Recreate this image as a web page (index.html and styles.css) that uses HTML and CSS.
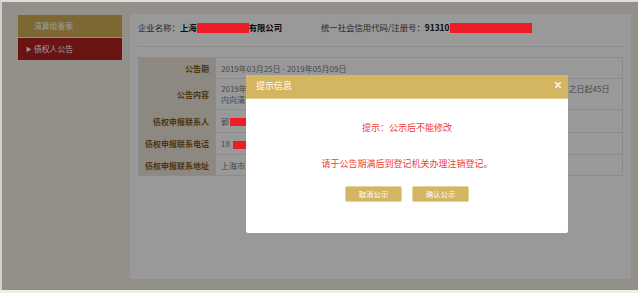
FILE: index.html
```html
<!DOCTYPE html>
<html lang="zh-CN">
<head>
<meta charset="utf-8">
<title>债权人公告</title>
<link rel="stylesheet" href="styles.css">
</head>
<body>
<div class="frame">
  <aside class="sidebar">
    <div class="side-item side-gold">清算组备案</div>
    <div class="side-item side-red"><span class="arrow">▶</span>债权人公告</div>
  </aside>
  <main class="panel">
    <div class="info-head">
      <div class="info-name">企业名称：<b>上海<span class="redact redact-name"></span>有限公司</b></div>
      <div class="info-code">统一社会信用代码/注册号：<b>91310<span class="redact redact-code"></span></b></div>
    </div>
    <table class="notice">
      <tr class="row-1"><th>公告期</th><td>2019年03月25日 - 2019年05月09日</td></tr>
      <tr class="row-2"><th>公告内容</th><td>2019年03月25日，上海某某有限公司经股东决定解散公司并成立了清算组，请各位债权人自本公告之日起45日<br>内向清算组申报债权，逾期未申报的视为放弃。</td></tr>
      <tr class="row-3"><th>债权申报联系人</th><td>郭<span class="redact redact-person"></span></td></tr>
      <tr class="row-4"><th>债权申报联系电话</th><td>18<span class="redact redact-phone"></span></td></tr>
      <tr class="row-5"><th>债权申报联系地址</th><td>上海市浦东新区某某路某某号</td></tr>
    </table>
  </main>
  <div class="overlay"></div>
  <div class="modal">
    <div class="modal-head">
      <span class="modal-title">提示信息</span>
      <svg class="modal-close" width="6" height="6" viewBox="0 0 6 6"><path d="M0.8 0.8 L5.2 5.2 M5.2 0.8 L0.8 5.2" stroke="#fff" stroke-width="1.5" stroke-linecap="round"/></svg>
    </div>
    <div class="modal-body">
      <p class="msg msg-1">提示：公示后不能修改</p>
      <p class="msg msg-2">请于公告期满后到登记机关办理注销登记。</p>
      <div class="actions">
        <button class="btn">取消公示</button>
        <button class="btn">确认公示</button>
      </div>
    </div>
  </div>
</div>
</body>
</html>
```

FILE: styles.css
```css
* { box-sizing: border-box; }
html, body { margin: 0; padding: 0; }
body {
  background: #efeee9;
  font-family: "Noto Sans CJK SC", "Noto Sans", sans-serif;
  width: 638px;
  height: 293px;
  overflow: hidden;
}
.frame {
  position: relative;
  height: 290px;
  border-top: 2px solid #dedede;
  border-left: 2px solid #cfcfcf;
  background: #f6f1e4;
  display: flex;
  align-items: flex-start;
  padding-top: 12px;
}
.sidebar {
  margin-left: 16px;
  width: 104px;
  display: flex;
  flex-direction: column;
  gap: 1px;
  margin-top: 1px;
}
.side-item {
  height: 22px;
  line-height: 22px;
  font-size: 7.8px;
  color: #fff;
  padding-left: 16px;
  position: relative;
}
.side-gold { background: #d0ad55; }
.side-red { background: #b22222; }
.arrow {
  position: absolute;
  left: 8px;
  font-size: 5.5px;
}
.panel {
  margin-left: 8px;
  width: 501px;
  height: 265px;
  background: #fff;
  padding: 0 8px;
}
.info-head {
  height: 26px;
  padding-top: 6px;
  display: flex;
  font-size: 8.4px;
  color: #444;
  border-bottom: 1px solid #e6e6e6;
  box-sizing: content-box;
}
.info-head b { color: #111; font-weight: 700; }
.info-name { width: 183px; line-height: 14px; }
.info-code { line-height: 14px; }
.redact {
  display: inline-block;
  position: relative;
  z-index: 15;
  background: #ee1c24;
  vertical-align: middle;
}
.redact-name { width: 52px; height: 10px; margin-top: -2px; }
.redact-code { width: 82px; height: 10px; margin-top: -1px; }
.redact-person { width: 17px; height: 8px; margin-left: 1px; }
.redact-phone { width: 18px; height: 8px; margin-left: 3px; }
.notice {
  margin-top: 10px;
  width: 485px;
  border-collapse: collapse;
  font-size: 8px;
}
.notice th, .notice td {
  border: 1px solid #e8e8e8;
  line-height: 11px;
}
.notice th {
  width: 77px;
  background: #ede4d5;
  color: #7e5a1c;
  font-weight: 700;
  text-align: right;
  padding: 0 6px 0 0;
  white-space: nowrap;
}
.notice td {
  color: #777;
  padding: 0 0 0 5px;
  white-space: nowrap;
}
.row-1 { height: 21px; }
.row-2 { height: 31px; }
.row-3 { height: 23px; }
.row-4 { height: 22px; }
.row-5 { height: 21px; }
.overlay {
  position: absolute;
  inset: 0;
  background: rgba(0, 0, 0, 0.4);
  z-index: 10;
}
.modal {
  position: absolute;
  left: 244px;
  top: 73px;
  width: 322px;
  height: 158px;
  background: #fff;
  border-radius: 2px;
  z-index: 20;
  overflow: hidden;
}
.modal-head {
  height: 24px;
  background: #d4b562;
  border-bottom: 1px solid #e3cd8c;
  position: relative;
  display: flex;
  align-items: center;
  padding-left: 10px;
}
.modal-title {
  color: #fff;
  font-size: 9px;
  margin-top: -2px;
}
.modal-close {
  position: absolute;
  right: 7px;
  top: 7px;
}
.modal-body {
  padding-top: 23px;
  text-align: center;
}
.msg {
  margin: 0;
  font-size: 9px;
  line-height: 12px;
  color: #f03c3c;
}
.msg-2 { margin-top: 24px; }
.actions {
  margin-top: 16px;
  display: flex;
  justify-content: center;
  gap: 10px;
}
.btn {
  width: 57px;
  height: 16px;
  padding: 0;
  border: 1px solid #e5d39f;
  border-radius: 2px;
  background: #d4b562;
  color: #fff;
  font-family: inherit;
  font-size: 7.4px;
  line-height: 14px;
}
```
